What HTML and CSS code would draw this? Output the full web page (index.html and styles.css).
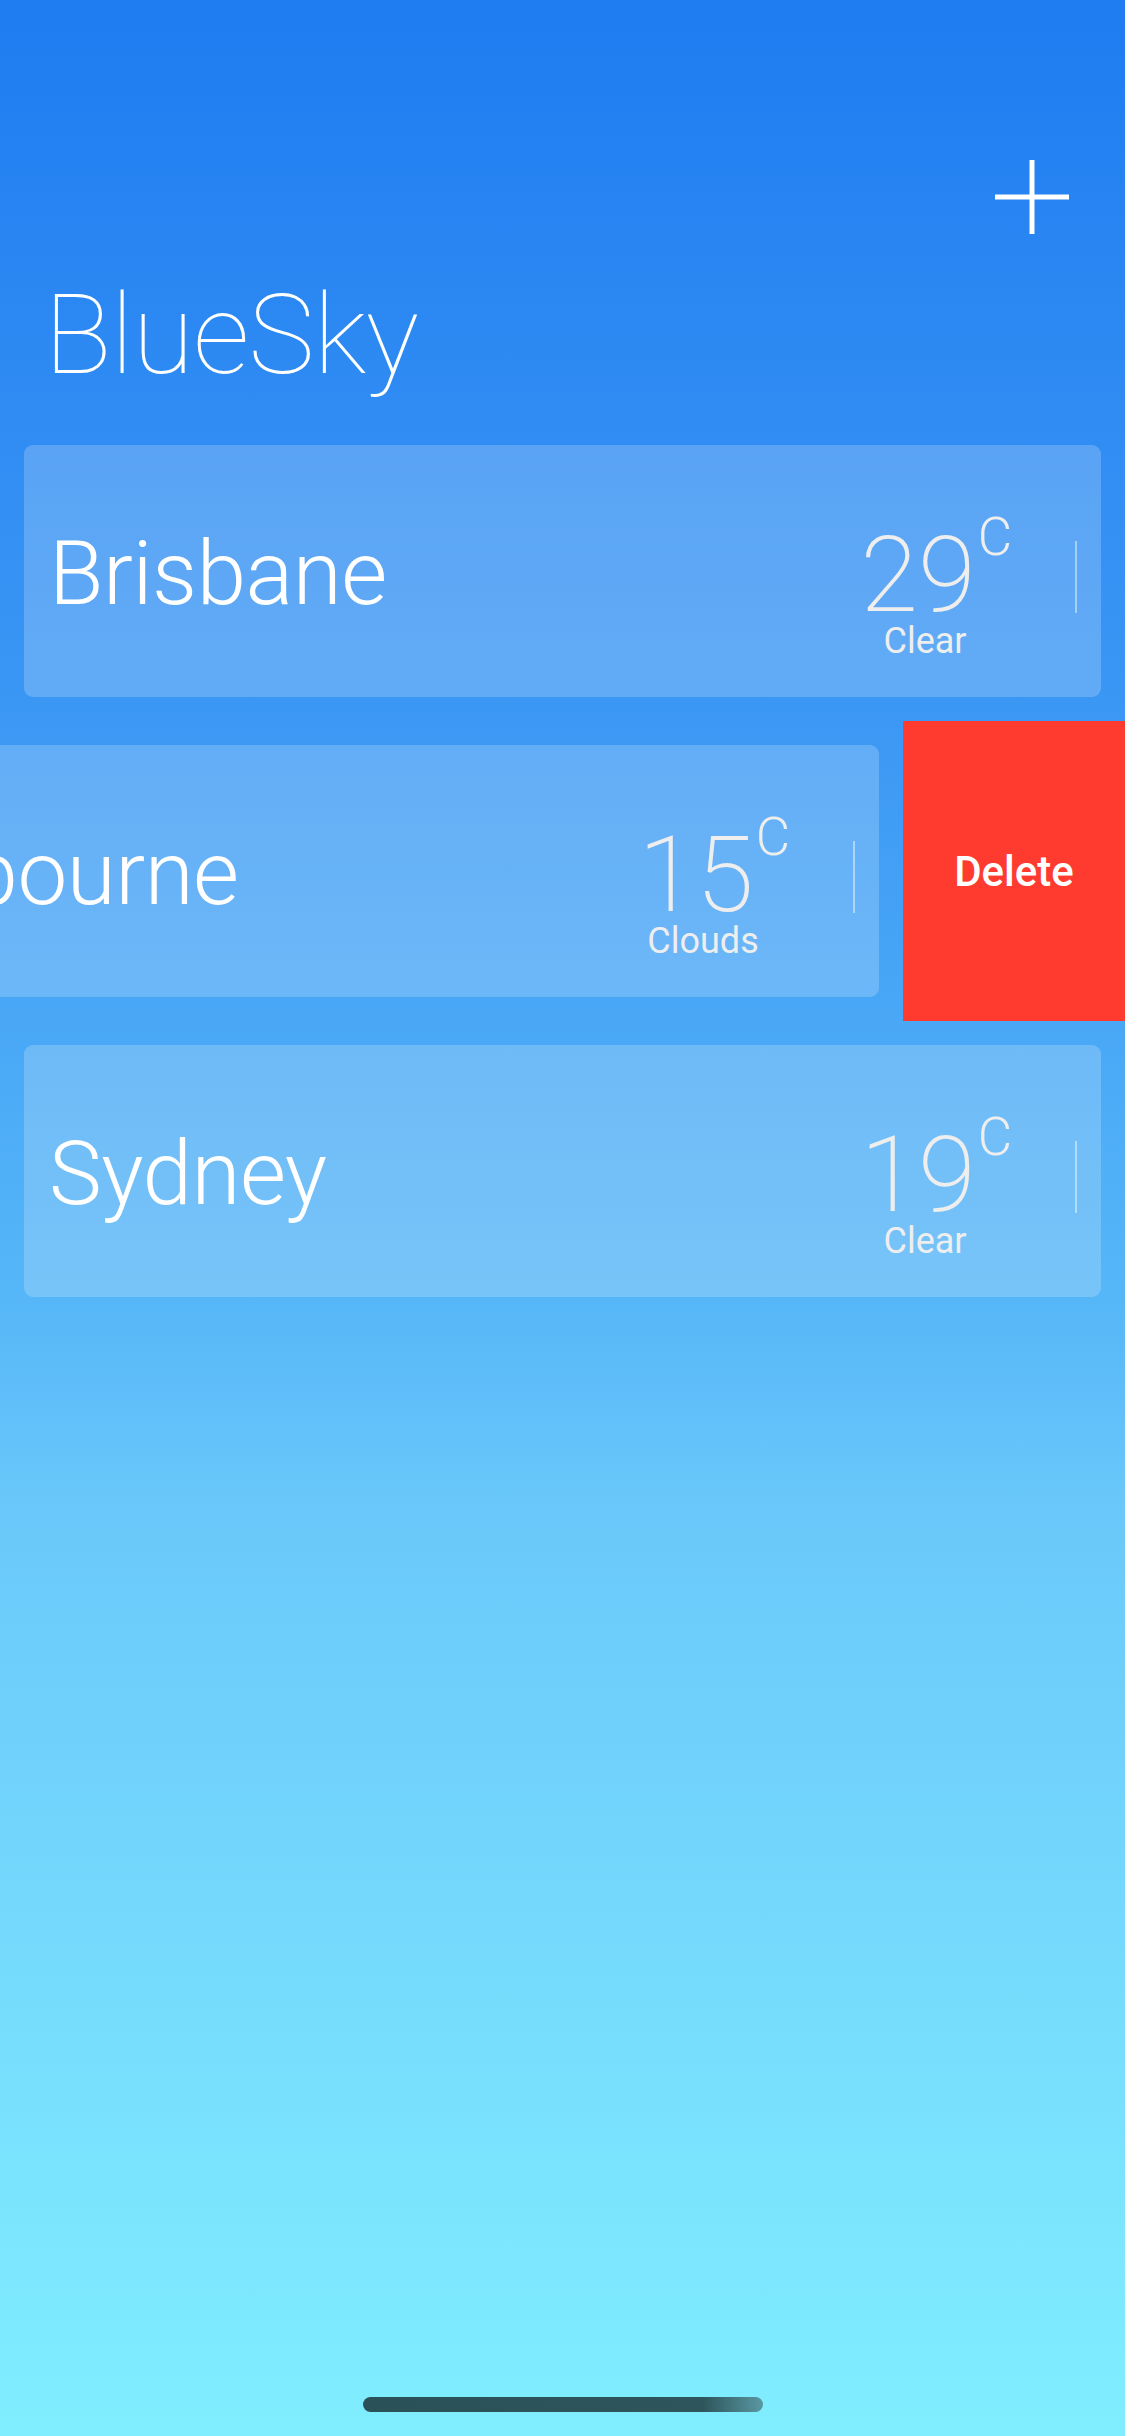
FILE: index.html
```html
<!DOCTYPE html>
<html lang="en">
<head>
<meta charset="utf-8">
<title>BlueSky</title>
<link rel="stylesheet" href="styles.css">
</head>
<body>
<div class="page">
  <header class="topbar">
    <button class="add-btn" aria-label="Add city">
      <svg width="74" height="74" viewBox="0 0 74 74" aria-hidden="true">
        <line x1="37" y1="0" x2="37" y2="74" stroke="#ffffff" stroke-width="5"/>
        <line x1="0" y1="37" x2="74" y2="37" stroke="#ffffff" stroke-width="5"/>
      </svg>
    </button>
  </header>

  <h1 class="title">BlueSky</h1>

  <main class="list">
    <div class="row">
      <div class="card">
        <div class="city">Brisbane</div>
        <div class="weather">
          <div class="temp"><span class="num">29<span class="unit">C</span></span></div>
          <div class="cond">Clear</div>
        </div>
        <div class="divider"></div>
      </div>
    </div>

    <div class="row swiped">
      <div class="card">
        <div class="city">Melbourne</div>
        <div class="weather">
          <div class="temp"><span class="num">15<span class="unit">C</span></span></div>
          <div class="cond">Clouds</div>
        </div>
        <div class="divider"></div>
      </div>
      <button class="delete">Delete</button>
    </div>

    <div class="row">
      <div class="card">
        <div class="city">Sydney</div>
        <div class="weather">
          <div class="temp"><span class="num">19<span class="unit">C</span></span></div>
          <div class="cond">Clear</div>
        </div>
        <div class="divider"></div>
      </div>
    </div>
  </main>

  <div class="home-indicator"></div>
</div>
</body>
</html>
```

FILE: styles.css
```css
* {
  box-sizing: border-box;
}

html, body {
  margin: 0;
  padding: 0;
}

body {
  width: 1125px;
  min-height: 2436px;
  overflow: hidden;
  font-family: Roboto, "Liberation Sans", sans-serif;
  color: #ffffff;
  background: linear-gradient(180deg, #1f7cf1 0%, #3b97f4 29%, #55b6f8 53%, #6ac8fa 62%, #80eeff 100%);
}

.page {
  display: flex;
  flex-direction: column;
  min-height: 2436px;
}

.topbar {
  display: flex;
  justify-content: flex-end;
  padding: 160px 56px 0 0;
}

.add-btn {
  display: block;
  width: 74px;
  height: 74px;
  padding: 0;
  border: 0;
  background: none;
}

.add-btn svg {
  display: block;
}

.title {
  margin: 45px 0 54px;
  padding-left: 44px;
  font-size: 112px;
  line-height: 1;
  font-weight: 100;
  letter-spacing: -1px;
}

.list {
  display: flex;
  flex-direction: column;
  gap: 48px;
}

.row {
  position: relative;
  padding: 0 24px;
}

.card {
  position: relative;
  z-index: 1;
  display: flex;
  align-items: center;
  height: 252px;
  padding: 0 24px 0 25px;
  border-radius: 9px;
  background: rgba(255, 255, 255, 0.2);
}

.row.swiped .card {
  transform: translateX(-222px);
}

.city {
  flex: 1;
  margin-top: 4px;
  font-size: 89px;
  line-height: 1;
  font-weight: 300;
  white-space: nowrap;
  letter-spacing: -0.5px;
}

.weather {
  display: flex;
  flex-direction: column;
  align-items: center;
  width: 170px;
  padding-top: 46px;
  margin-right: 65px;
  color: #eeeeee;
}

.temp {
  line-height: 0.9;
}

.num {
  position: relative;
  display: inline-block;
  margin-right: 14px;
  font-size: 105px;
  line-height: 0.9;
  font-weight: 200;
}

.unit {
  position: absolute;
  left: 100%;
  top: -18px;
  margin-left: 2px;
  font-size: 53px;
  line-height: 1;
  font-weight: 300;
}

.cond {
  font-size: 36px;
  line-height: 1;
  font-weight: 400;
}

.divider {
  width: 2px;
  height: 72px;
  margin-top: 12px;
  background: rgba(255, 255, 255, 0.45);
}

.delete {
  position: absolute;
  top: -24px;
  bottom: -24px;
  right: 0;
  width: 222px;
  padding: 0;
  border: 0;
  background: #ff3b30;
  color: #ffffff;
  font-family: Roboto, sans-serif;
  font-size: 42px;
  font-weight: 500;
}

.home-indicator {
  align-self: center;
  width: 400px;
  height: 15px;
  margin-top: auto;
  margin-bottom: 24px;
  border-radius: 8px;
  background: linear-gradient(90deg, #2b5158 0%, #2e555c 85%, #5a98a2 100%);
}
```
